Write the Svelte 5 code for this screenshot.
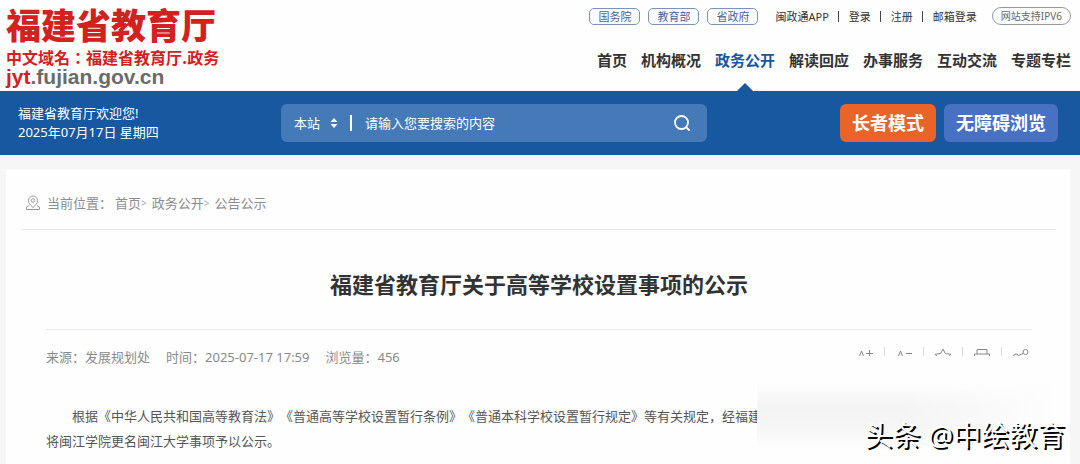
<script lang="ts">
    let keyword : string = $state("");
    let scope : string = $state("本站");

    const portals : string[] = ["国务院", "教育部", "省政府"];
    const userLinks : string[] = ["闽政通APP", "登录", "注册", "邮箱登录"];
    const menu : string[] = ["首页", "机构概况", "政务公开", "解读回应", "办事服务", "互动交流", "专题专栏"];
    const active : string = "政务公开";

    function search(e : Event)
    {
        e.preventDefault();
    }
</script>

<div class="page">
    <header>
        <a class="logo" href="#top">
            <span class="name">福建省教育厅</span>
            <span class="domain">中文域名：福建省教育厅.政务</span>
            <span class="url"><b>jyt</b>.fujian.gov.cn</span>
        </a>
        <div class="right">
            <div class="top">
                <div class="portals">
                    {#each portals as portal}
                        <a class="pill" href="#portal">{portal}</a>
                    {/each}
                </div>
                <div class="user">
                    {#each userLinks as link}
                        <a href="#user">{link}</a>
                    {/each}
                </div>
                <span class="ipv6">网站支持IPV6</span>
            </div>
            <nav>
                {#each menu as item}
                    <a href="#menu" class:active={item == active}>{item}</a>
                {/each}
            </nav>
        </div>
    </header>

    <div class="bar">
        <div class="welcome">
            福建省教育厅欢迎您!<br>
            2025年07月17日 星期四
        </div>
        <form class="search" onsubmit={search}>
            <select aria-label="搜索范围" bind:value={scope}>
                <option>本站</option>
            </select>
            <svg class="arrows" viewBox="0 0 8 12" aria-hidden="true">
                <path d="M4 1 7.5 5h-7zM4 11 .5 7h7z" fill="#fff" />
            </svg>
            <span class="line"></span>
            <input type="text" aria-label="搜索" placeholder="请输入您要搜索的内容" bind:value={keyword}>
            <button class="go" aria-label="搜索">
                <svg viewBox="0 0 18 18" fill="none" stroke="#fff" stroke-width="1.8" stroke-linecap="round">
                    <circle cx="8.5" cy="8.5" r="6.5" />
                    <path d="m13.3 13.3 2.7 2.7" />
                </svg>
            </button>
        </form>
        <div class="modes">
            <button class="elder">长者模式</button>
            <button class="barrier">无障碍浏览</button>
        </div>
    </div>

    <main>
        <div class="crumbs">
            <svg viewBox="0 0 16 16" fill="none" stroke="#999">
                <path d="M8 12.5C5 9.7 3.5 8 3.5 5.5a4.5 4.5 0 0 1 9 0C12.5 8 11 9.7 8 12.5z" />
                <circle cx="8" cy="5.5" r="1.8" />
                <path d="M4 10.5 1.5 12v2.5h13V12L12 10.5" />
            </svg>
            <span class="here">当前位置：</span>
            <a href="#home">首页</a><i>&gt;</i>
            <a href="#open">政务公开</a><i>&gt;</i>
            <a href="#notice">公告公示</a>
        </div>
        <article>
            <h1>福建省教育厅关于高等学校设置事项的公示</h1>
            <div class="meta">
                <span>来源：发展规划处</span>
                <span>时间：2025-07-17 17:59</span>
                <span>浏览量：456</span>
                <div class="tools">
                    <svg viewBox="0 0 18 16"><path d="M1.5 14 5.5 4l4 10M3 10.5h5M10 6.5h7M13.5 3v7" /></svg>
                    <svg viewBox="0 0 18 16"><path d="M1.5 14 5.5 4l4 10M3 10.5h5M11 6.5h6" /></svg>
                    <svg viewBox="0 0 18 16"><path d="m9 2 2.3 4.5 5.7.8-4 3.7 1 5-5-2.5L4 16l1-5-4-3.7 5.7-.8z" /></svg>
                    <svg viewBox="0 0 18 16"><path d="M4 7V2.5h10V7M4 12H1.500V7h15v5H14M4 10h10v5H4z" /></svg>
                    <svg viewBox="0 0 18 16"><circle cx="13.5" cy="5" r="2.5" /><circle cx="4" cy="9.5" r="2.5" /><circle cx="13" cy="13" r="2.5" /><path d="m6.5 8.5 4.5-2M6.5 10.5l4 1.5" /></svg>
                </div>
            </div>
            <p>
                根据《中华人民共和国高等教育法》《普通高等学校设置暂行条例》《普通本科学校设置暂行规定》等有关规定，经福建<br>
                将闽江学院更名闽江大学事项予以公示。
            </p>
        </article>
        <div class="smudge"></div>
        <div class="watermark">头条 @中绘教育</div>
    </main>
</div>

<style>
    :global(body)
    {
        background: #f6f6f6;
    }

    .page
    {
        font-family: "Noto Sans", "Noto Sans CJK SC", sans-serif;
        font-size: 13px;
        color: #333;
        min-height: 100vh;
        display: flex;
        flex-direction: column;
    }

    a
    {
        color: inherit;
        text-decoration: none;
    }

    button, input, select
    {
        font: inherit;
        color: #fff;
        border: none;
        background: none;
        padding: 0;
        margin: 0;
        outline: none;
    }

    header
    {
        display: flex;
        justify-content: space-between;
        height: 91px;
        background: #fefefe;
        padding: 0 9px 0 6px;
    }

    .logo
    {
        display: flex;
        flex-direction: column;
        padding-top: 5px;
        color: #d3211f;
        white-space: nowrap;
    }

    .name
    {
        font-size: 35px;
        font-weight: 900;
        line-height: 42px;
    }

    .domain
    {
        font-family: "Noto Sans CJK TC", sans-serif;
        font-size: 16px;
        font-weight: 700;
        line-height: 20px;
    }

    .url
    {
        font: bold 21px/20px "Liberation Sans", sans-serif;
        color: #6b6b6b;
    }

    .url b
    {
        color: #d3211f;
    }

    .right
    {
        display: flex;
        flex-direction: column;
        align-items: flex-end;
        padding-top: 7px;
        white-space: nowrap;
    }

    .top
    {
        display: flex;
        align-items: center;
        font-size: 11px;
        height: 18px;
    }

    .portals
    {
        display: flex;
        gap: 8px;
        margin-right: 17px;
    }

    .pill
    {
        border: 1px solid #7b93b5;
        border-radius: 5px;
        line-height: 15px;
        padding: 0 8px;
        color: #42649a;
    }

    .user
    {
        display: flex;
        line-height: 11px;
    }

    .user a + a
    {
        display: flex;
        margin-left: 9px;
    }

    .user a + a::before
    {
        content: "";
        width: 1px;
        background: #444;
        margin-right: 10px;
    }

    .ipv6
    {
        margin-left: 15px;
        border: 1px solid #999;
        border-radius: 9px;
        font-size: 10px;
        line-height: 16px;
        padding: 0 8px;
        color: #666;
    }

    nav
    {
        display: flex;
        gap: 14px;
        font-size: 15px;
        font-weight: 700;
        line-height: 30px;
        padding-top: 20px;
    }

    nav a
    {
        height: 46px;
        display: flex;
        flex-direction: column;
        align-items: center;
        justify-content: space-between;
    }

    nav .active
    {
        color: #1b559c;
    }

    nav .active::after
    {
        content: "";
        border: 8px solid transparent;
        border-top: none;
        border-bottom-color: #1758a1;
    }

    .bar
    {
        display: flex;
        align-items: center;
        height: 64px;
        background: #1758a1;
        color: #fff;
        padding: 0 22px 0 18px;
    }

    .welcome
    {
        flex: 0 0 263px;
        line-height: 19px;
    }

    .search
    {
        flex: 1;
        max-width: 426px;
        height: 38px;
        display: flex;
        align-items: center;
        border-radius: 6px;
        background: #457ab8;
        padding: 0 16px 0 13px;
        box-sizing: border-box;
    }

    .search select
    {
        appearance: none;
        width: 36px;
    }

    .arrows
    {
        width: 8px;
        height: 12px;
    }

    .line
    {
        width: 2px;
        height: 16px;
        background: #fff;
        margin: 0 13px 0 12px;
    }

    .search input
    {
        flex: 1;
        min-width: 0;
    }

    .search input::placeholder
    {
        color: #fff;
        opacity: 1;
    }

    .go
    {
        width: 18px;
        height: 18px;
    }

    .go svg
    {
        display: block;
    }

    .modes
    {
        display: flex;
        gap: 8px;
        margin-left: auto;
    }

    .modes button
    {
        height: 38px;
        border-radius: 6px;
        font-size: 18px;
        font-weight: 700;
        line-height: 38px;
        padding: 0 12px;
        white-space: nowrap;
    }

    .elder
    {
        background: #ea6429;
    }

    .barrier
    {
        background: #4870c3;
    }

    main
    {
        position: relative;
        flex: 1;
        background: #fefefe;
        margin: 14px 10px 0 6px;
        padding: 0 14px 0 16px;
    }

    .crumbs
    {
        display: flex;
        align-items: center;
        height: 61px;
        padding: 7px 0 0 3px;
        box-sizing: border-box;
        color: #8d8d8d;
        border-bottom: 1px solid #e6e6e6;
    }

    .crumbs svg
    {
        width: 16px;
        height: 16px;
        margin-right: 6px;
    }

    .here
    {
        margin-right: 3px;
    }

    .crumbs i
    {
        font-style: normal;
        font-size: 10px;
        color: #aaa;
        margin-right: 5px;
    }

    article
    {
        margin: 0 24px;
    }

    h1
    {
        margin: 0;
        padding-top: 9px;
        height: 90px;
        border-bottom: 1px solid #e6e6e6;
        font-size: 22px;
        line-height: 90px;
        font-weight: 700;
        text-align: center;
    }

    .meta
    {
        display: flex;
        align-items: center;
        gap: 16px;
        height: 52px;
        color: #8a8a8a;
    }

    .tools
    {
        display: flex;
        gap: 21px;
        height: 9px;
        overflow: hidden;
        margin: 0 2px 10px auto;
    }

    .tools svg
    {
        width: 18px;
        height: 16px;
        fill: none;
        stroke: #888;
    }

    .tools svg + svg
    {
        border-left: 1px solid #ddd;
        padding-left: 10px;
        margin-left: -11px;
    }

    p
    {
        margin: 22px 0 0;
        line-height: 25px;
        text-indent: 26px;
        text-spacing-trim: space-all;
        color: #555;
        white-space: nowrap;
    }

    .smudge
    {
        position: absolute;
        right: 20px;
        bottom: 16px;
        width: 293px;
        height: 64px;
        background: linear-gradient(to right, transparent 50%, #fdfdfd), linear-gradient(#fdfdfd, #f4f4f4 35%, #f5f5f5 65%, #fdfdfd);
    }

    .watermark
    {
        position: absolute;
        right: 5px;
        bottom: 9px;
        font-size: 28px;
        line-height: 40px;
        color: #fff;
        text-shadow: 2px 2px 0 #000;
        white-space: nowrap;
    }
</style>
